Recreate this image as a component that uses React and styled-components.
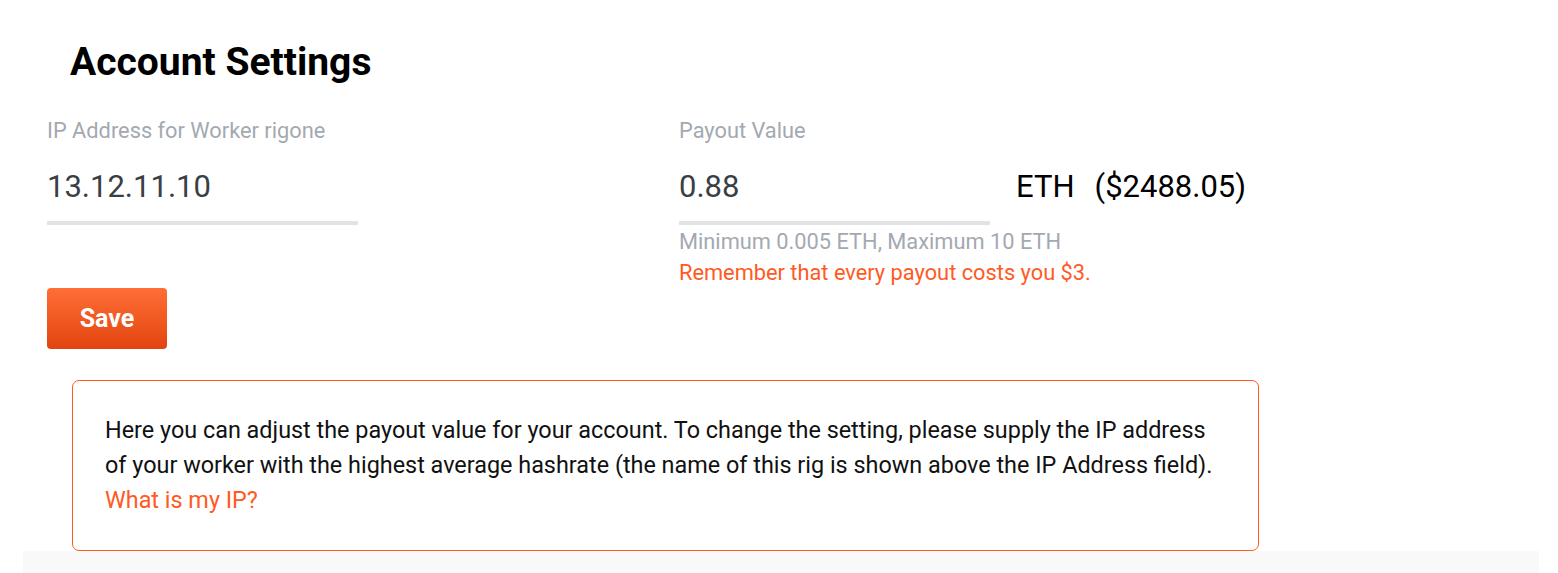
import React from 'react'
import styled, {createGlobalStyle} from 'styled-components'

const GlobalStyle = createGlobalStyle`
    body {
        margin: 0;
        background: #ffffff;
        font-family: Roboto, "Liberation Sans", sans-serif;
    }
`;

const Page = styled.div`
    width: 1558px;
    height: 573px;
    overflow: hidden;
    box-sizing: border-box;
    padding-top: 40px;
`;

const Section = styled.div`
    padding-left: 47px;
`;

const Title = styled.h1`
    margin: 0 0 0 23px;
    font-size: 39px;
    font-weight: 700;
    color: #000;
    line-height: 44px;
`;

const Form = styled.div`
    display: grid;
    grid-template-columns: 632px auto;
    margin-top: 34px;
`;

const Field = styled.div`
    display: flex;
    flex-direction: column;
`;

const Label = styled.label`
    font-size: 21.8px;
    color: #a3a9b1;
    line-height: 26px;
`;

const InputRow = styled.div`
    display: flex;
    align-items: flex-start;
    margin-top: 25px;
`;

const Input = styled.input`
    width: 311px;
    box-sizing: border-box;
    border: none;
    border-bottom: 4px solid #e1e4e7;
    padding: 0 0 16px 0;
    margin: 0;
    font-family: Roboto, "Liberation Sans", sans-serif;
    font-size: 31px;
    line-height: 36px;
    color: #3a3f45;
    outline: none;
    background: transparent;
`;

const Unit = styled.span`
    font-size: 31px;
    line-height: 36px;
    color: #000;
    margin-left: ${props => props.gap}px;
`;

const Hint = styled.div`
    font-size: 21.8px;
    line-height: 31px;
    color: ${props => props.warn ? '#ff5a1f' : '#a3a9b1'};
    margin-top: ${props => props.first ? '1px' : '0'};
`;

const SaveButton = styled.button`
    margin-top: 0;
    width: 120px;
    height: 61px;
    border: none;
    border-radius: 4px;
    background: linear-gradient(180deg, #ff6e38 0%, #f15a22 50%, #e2440f 100%);
    color: #fff;
    font-family: Roboto, "Liberation Sans", sans-serif;
    font-size: 25px;
    font-weight: 700;
    cursor: pointer;
`;

const InfoBox = styled.div`
    margin: 31px 0 0 72px;
    width: 1187px;
    height: 171px;
    box-sizing: border-box;
    border: 1px solid #ff5a1f;
    border-radius: 7px;
    padding: 32px 32px 0 32px;
    font-size: 23.4px;
    line-height: 35px;
    color: #111;
`;

const Link = styled.a`
    color: #ff5a1f;
    text-decoration: none;
`;

const Footer = styled.div`
    margin: 0 19px 0 23px;
    height: 40px;
    background: #f9f9f9;
`;

const App = () => {
    return (
        <Page>
            <GlobalStyle />
            <Section>
                <Title>Account Settings</Title>
                <Form>
                    <Field>
                        <Label>IP Address for Worker rigone</Label>
                        <InputRow>
                            <Input defaultValue="13.12.11.10" />
                        </InputRow>
                    </Field>
                    <Field>
                        <Label>Payout Value</Label>
                        <InputRow>
                            <Input defaultValue="0.88" />
                            <Unit gap={26}>ETH</Unit>
                            <Unit gap={20}>($2488.05)</Unit>
                        </InputRow>
                        <Hint first>Minimum 0.005 ETH, Maximum 10 ETH</Hint>
                        <Hint warn>Remember that every payout costs you $3.</Hint>
                    </Field>
                </Form>
                <SaveButton>Save</SaveButton>
            </Section>
            <InfoBox>
                Here you can adjust the payout value for your account. To change the setting, please supply the IP address
                of your worker with the highest average hashrate (the name of this rig is shown above the IP Address field).
                <br />
                <Link href="#">What is my IP?</Link>
            </InfoBox>
            <Footer />
        </Page>
    )
}

export default App
